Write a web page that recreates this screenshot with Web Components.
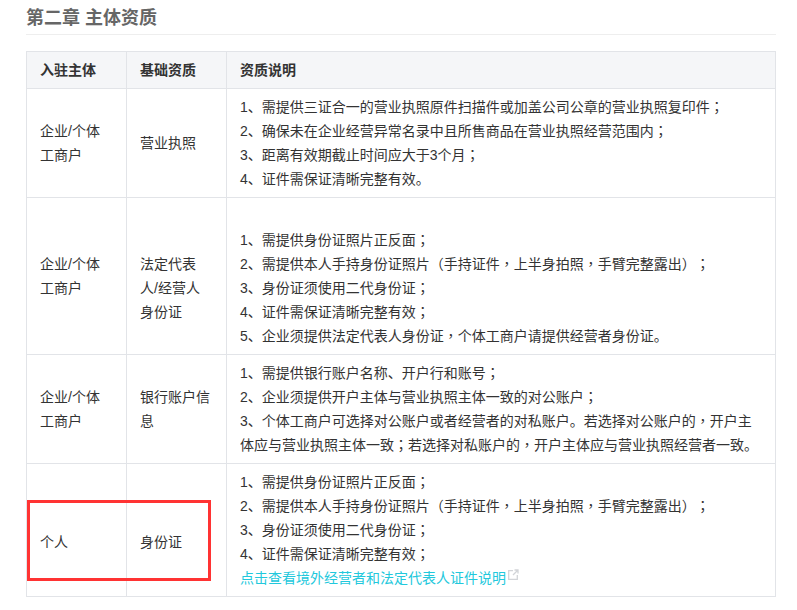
<!DOCTYPE html>
<html lang="zh"><head><meta charset="utf-8">
<style>
html,body{margin:0;background:#fff;overflow:hidden}
body{font:14px/24px "Liberation Sans","Noto Sans CJK SC",sans-serif;color:#333;text-spacing-trim:space-all}
.p{font-family:"Noto Sans CJK TC",sans-serif;line-height:0}
</style></head>
<body>
<doc-page>
  <doc-heading>第二章 主体资质</doc-heading>
  <spec-table>
    <spec-row head><span>入驻主体</span><span slot="b">基础资质</span><span slot="c">资质说明</span></spec-row>
    <spec-row><span>企业/个体<br>工商户</span><span slot="b">营业执照</span><div slot="c">1、需提供三证合一的营业执照原件扫描件或加盖公司公章的营业执照复印件；<br>2、确保未在企业经营异常名录中且所售商品在营业执照经营范围内；<br>3、距离有效期截止时间应大于3个月；<br>4、证件需保证清晰完整有效。</div></spec-row>
    <spec-row><span>企业/个体<br>工商户</span><span slot="b"><br>法定代表人/经营人身份证</span><div slot="c"><br>1、需提供身份证照片正反面；<br>2、需提供本人手持身份证照片（手持证件，上半身拍照，手臂完整露出）；<br>3、身份证须使用二代身份证；<br>4、证件需保证清晰完整有效；<br>5、企业须提供法定代表人身份证，个体工商户请提供经营者身份证。</div></spec-row>
    <spec-row><span>企业/个体<br>工商户</span><span slot="b">银行账户信息</span><div slot="c">1、需提供银行账户名称、开户行和账号；<br>2、企业须提供开户主体与营业执照主体一致的对公账户；<br>3、个体工商户可选择对公账户或者经营者的对私账户。若选择对公账户的，开户主<br>体应与营业执照主体一致；若选择对私账户的，开户主体应与营业执照经营者一致。</div></spec-row>
    <spec-row><span><br>个人</span><span slot="b"><br>身份证</span><div slot="c">1、需提供身份证照片正反面；<br>2、需提供本人手持身份证照片（手持证件，上半身拍照，手臂完整露出）；<br>3、身份证须使用二代身份证；<br>4、证件需保证清晰完整有效；<br><ext-link>点击查看境外经营者和法定代表人证件说明</ext-link></div></spec-row>
  </spec-table>
  <mark-box></mark-box>
</doc-page>
<script>
function def(name, css, html){
  customElements.define(name, class extends HTMLElement{
    constructor(){super();this.attachShadow({mode:'open'}).innerHTML='<style>'+css+'</style>'+html;}
  });
}
def('doc-page',':host{display:block;position:relative;width:750px;margin-left:26px;padding-top:6px}','<slot></slot>');
def('doc-heading',':host{display:block;font-size:18px;line-height:25px;font-weight:700;color:#666;border-bottom:1px solid #eee;height:28px;margin-bottom:16px}','<slot></slot>');
def('spec-table',':host{display:block;border:1px solid #e2e4e8;border-bottom:0;box-sizing:border-box;width:750px}','<slot></slot>');
def('spec-row',`:host{display:grid;grid-template-columns:99px 100px 1fr;border-bottom:1px solid #e2e4e8;box-sizing:border-box}
:host([head]){background:#f5f6f8;font-weight:700}
.c{display:flex;align-items:center;box-sizing:border-box;padding:6px 12.5px 6px 13px;border-left:1px solid #e2e4e8}
.c:first-of-type{border-left:0}
.w{display:block;min-width:0}`,
'<div class="c"><div class="w"><slot></slot></div></div><div class="c"><div class="w"><slot name="b"></slot></div></div><div class="c"><div class="w"><slot name="c"></slot></div></div>');
def('ext-link',`:host{color:#22c8dc}
svg{display:inline-block;width:11px;height:11px;vertical-align:3px;margin-left:2px}`,
'<slot></slot><svg viewBox="0 0 11 11" fill="none" stroke="#d2d4d8" stroke-width="1.3"><path d="M5 1.7H.7v8.6h8.6V6"/><path d="M6.5 1h3.5v3.5M10 1L5 6"/></svg>');
def('mark-box',':host{position:absolute;left:1px;top:500px;width:184px;height:81px;box-sizing:border-box;border:3.5px solid #f33;pointer-events:none}','');
document.querySelectorAll('[slot="c"]').forEach(el=>{
  el.innerHTML=el.innerHTML.replace(/[，；（）]/g,'<span class="p" lang="zh-Hant">$&</span>');
});
</script>
</body></html>
